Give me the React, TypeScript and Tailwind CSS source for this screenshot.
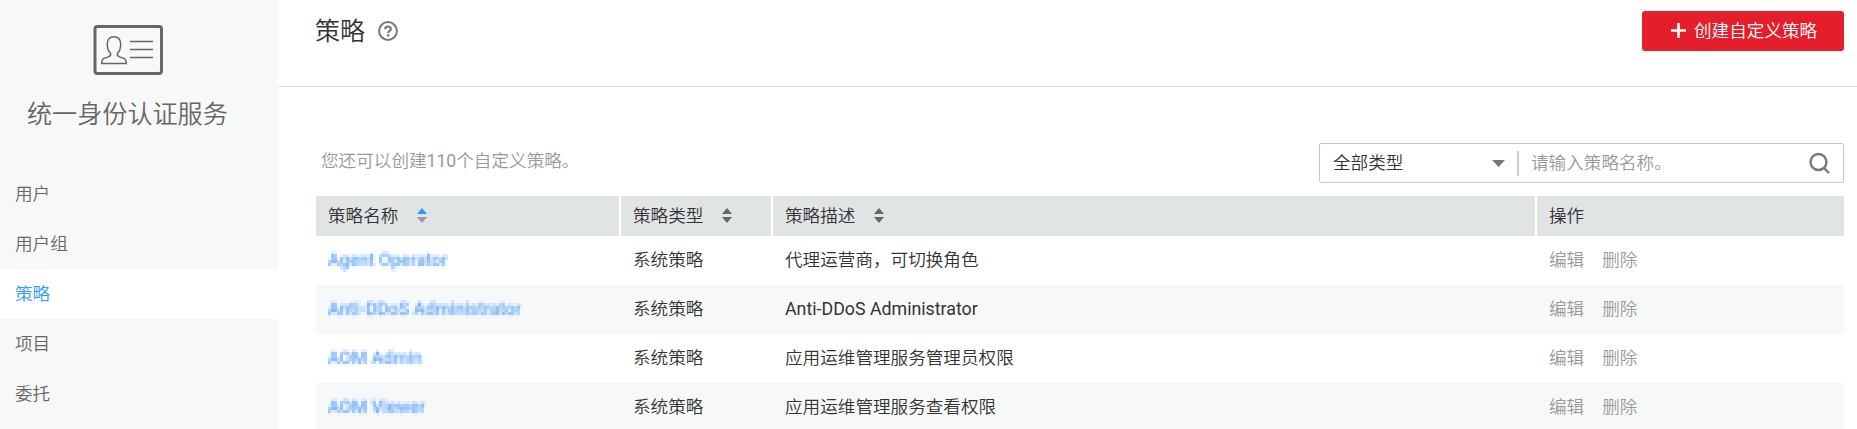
import React from "react";

const nav = ["用户", "用户组", "策略", "项目", "委托"];

const rows = [
  { name: "Agent Operator", desc: "代理运营商，可切换角色" },
  { name: "Anti-DDoS Administrator", desc: "Anti-DDoS Administrator", latin: true },
  { name: "AOM Admin", desc: "应用运维管理服务管理员权限" },
  { name: "AOM Viewer", desc: "应用运维管理服务查看权限" },
];

const grid = "grid grid-cols-[303px_150px_762px_307px] gap-x-[2px]";

function SortIcon({ active = false }: { active?: boolean }) {
  return (
    <svg width="10" height="15" viewBox="0 0 10 15" className="ml-[19px] mb-[2px]">
      <path d="M5 0L10 6H0Z" fill={active ? "#3399ff" : "#666"} />
      <path d="M0 9H10L5 15Z" fill={active ? "#999" : "#666"} />
    </svg>
  );
}

function IdCard() {
  return (
    <svg width="70" height="50" viewBox="0 0 70 50" fill="none" stroke="#666" className="mt-[25px]">
      <rect x="2" y="1.5" width="66.500" height="47" rx="2.500" strokeWidth="3" />
      <path
        d="M21 11.700c-4 0-6.700 2.800-6.700 7 0 4 .8 7.500 3.200 9.500.7 2-.5 3-2 3.700l-4.500 1.500c-1.700.7-2.300 2-2.300 5.100h24.600c0-3.100-.6-4.400-2.300-5.100l-4.500-1.500c-1.500-.7-2.700-1.700-2-3.700 2.400-2 3.200-5.500 3.200-9.500 0-4.200-2.700-7-6.700-7z"
        strokeWidth="1.500"
      />
      <path d="M37 16.500H60M37 24.500H60M37 32.500H60" strokeWidth="1.500" />
    </svg>
  );
}

export default function App() {
  return (
    <div className="flex h-[429px] w-full overflow-hidden bg-white font-['Roboto','Noto_Sans_CJK_SC',sans-serif] text-[17.6px] leading-[24px] font-[350] text-[#333]">
      <svg width="0" height="0" className="absolute">
        <filter id="mosaic" x="0" y="0" width="100%" height="100%" primitiveUnits="userSpaceOnUse" colorInterpolationFilters="sRGB">
          <feGaussianBlur in="SourceGraphic" stdDeviation="0.8" result="soft" />
          <feFlood x="1" y="1" width="1" height="1" />
          <feComposite x="0" y="0" width="3" height="3" />
          <feTile x="0" y="0" width="260" height="30" result="dots" />
          <feComposite in="soft" in2="dots" operator="in" />
          <feMorphology operator="dilate" radius="1" />
        </filter>
      </svg>

      <aside className="flex w-[278px] shrink-0 flex-col bg-[#f7f9f8] text-[#666]">
        <div className="flex flex-col items-center pr-[22px]">
          <IdCard />
        </div>
        <h2 className="mt-[22px] pl-[27px] text-[25.1px] leading-[36px]">统一身份认证服务</h2>
        <nav className="mt-[36px]">
          {nav.map((n) => (
            <a
              key={n}
              className={
                n === "策略"
                  ? "flex h-[50px] items-center bg-white pl-[15px] text-[#3399ff]"
                  : "flex h-[50px] items-center pl-[15px]"
              }
            >
              {n}
            </a>
          ))}
        </nav>
      </aside>

      <main className="min-w-0 flex-1">
        <header className="flex h-[87px] items-start justify-between border-b border-[#dfdfdf] pl-[37px] pr-[13px]">
          <div className="flex items-center pt-[13px]">
            <h1 className="pt-px text-[25.1px] leading-[36px]">策略</h1>
            <svg width="20" height="20" viewBox="0 0 20 20" fill="none" stroke="#777" strokeWidth="2" className="mb-px ml-[13px]">
              <circle cx="10" cy="10" r="8.900" />
              <path d="M7.200 8.200c0-1.800 1.200-2.700 2.800-2.700s2.800.9 2.800 2.400c0 1.900-2.600 2-2.600 4" strokeWidth="2.200" />
              <path d="M10.200 13.200v2.300" strokeWidth="2.300" />
            </svg>
          </div>
          <button className="mt-[11px] flex h-[40px] w-[202px] items-center rounded-[3px] bg-[#e41f2b] pl-[29px] text-white">
            <svg width="15" height="15" viewBox="0 0 15 15" stroke="#fff" strokeWidth="2.600" className="mr-[8px] mb-[2px]">
              <path d="M7.500 0V15M0 7.500H15" />
            </svg>
            创建自定义策略
          </button>
        </header>

        <section className="pl-[38px] pr-[13px]">
          <div className="flex h-[109px] items-end justify-between pb-[13px]">
            <p className="mb-[10px] pl-[5px] text-[#999]">
              您还可以创建<span className="font-normal">110</span>个自定义策略。
            </p>
            <div className="flex h-[40px] w-[525px] items-center rounded-[2px] border border-[#c6c6c6] pl-[13px] pr-[13px]">
              <span className="flex-1">全部类型</span>
              <svg width="13" height="7" viewBox="0 0 13 7" className="mr-[12px]">
                <path d="M0 0H13L6.500 7Z" fill="#777" />
              </svg>
              <span className="h-[25px] w-[2px] bg-[#ccc]" />
              <span className="w-[290px] pl-[12px] text-[#999]">请输入策略名称。</span>
              <svg width="21" height="22" viewBox="0 0 21 22" fill="none" stroke="#777" strokeWidth="2.400">
                <circle cx="9.500" cy="10" r="8" />
                <path d="M14.500 15.500L20 21" />
              </svg>
            </div>
          </div>

          <div className={grid}>
            <div className="flex h-[40px] items-center bg-[#e0e4e4] pl-[12px]">策略名称<SortIcon active /></div>
            <div className="flex h-[40px] items-center bg-[#e0e4e4] pl-[12px]">策略类型<SortIcon /></div>
            <div className="flex h-[40px] items-center bg-[#e0e4e4] pl-[12px]">策略描述<SortIcon /></div>
            <div className="flex h-[40px] items-center bg-[#e0e4e4] pl-[12px]">操作</div>
          </div>
          {rows.map((r) => (
            <div key={r.name} className={`${grid} h-[49px] items-center pb-px odd:bg-white even:bg-[#f7f9f8]`}>
              <div className="pl-[12px]">
                <a className="inline-block align-top font-medium text-[#5ca3ff] [filter:url(#mosaic)]">{r.name}</a>
              </div>
              <div className="pl-[12px]">系统策略</div>
              <div className={r.latin ? "pl-[12px] text-[17.8px] font-normal" : "pl-[12px]"}>{r.desc}</div>
              <div className="flex gap-[18px] pl-[12px] text-[#999]">
                <span>编辑</span>
                <span>删除</span>
              </div>
            </div>
          ))}
        </section>
      </main>
    </div>
  );
}
